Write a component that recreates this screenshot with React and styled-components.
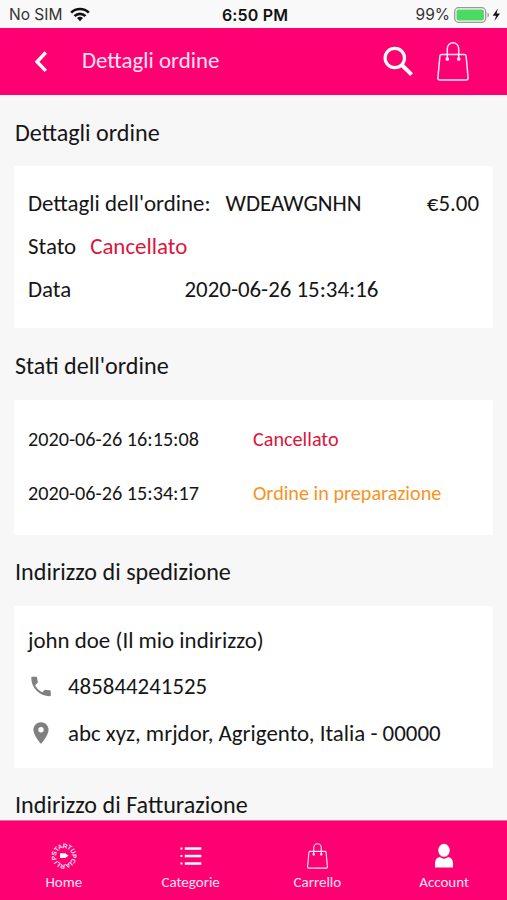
import React from 'react';
import styled, { createGlobalStyle } from 'styled-components';
import { MdPhone, MdPlace } from 'react-icons/md';

const GlobalStyle = createGlobalStyle`
  * {
    box-sizing: border-box;
  }

  body {
    margin: 0;
    background-color: #f7f7f7;
  }
`;

const Screen = styled.div`
  display: flex;
  flex-direction: column;
  height: 100vh;
  overflow: hidden;
  background-color: #f7f7f7;
  color: #161616;
  font-family: Carlito, Calibri, Lato, sans-serif;
`;

const StatusBar = styled.div`
  display: grid;
  grid-template-columns: 1fr auto 1fr;
  align-items: center;
  flex: none;
  height: 28px;
  padding: 1px 6px 0 9px;
  background-color: #f9f9f9;
  font-family: Inter, 'Liberation Sans', sans-serif;
  font-size: 15.5px;
  color: #333;
`;

const StatusGroup = styled.div`
  display: flex;
  align-items: center;
  justify-content: ${(p) => (p.$end ? 'flex-end' : 'flex-start')};
`;

const Carrier = styled.span`
  margin-right: 8px;
`;

const Clock = styled.span`
  font-weight: 600;
  font-size: 16px;
  letter-spacing: 0.15px;
  color: #111;
`;

const Percent = styled.span`
  margin-right: 4px;
`;

const Header = styled.header`
  display: flex;
  align-items: center;
  flex: none;
  height: 67px;
  padding: 0 38px 0 33px;
  background-color: #ff0073;
  color: #fff;
`;

const BackButton = styled.button`
  display: flex;
  padding: 0;
  border: none;
  background: none;
`;

const Title = styled.h1`
  flex: 1;
  margin: 0 0 3px 32px;
  font-size: 22.9px;
  line-height: 28px;
  font-weight: 400;
  color: #ffe3f0;
`;

const HeaderIcons = styled.div`
  display: flex;
  align-items: center;
  gap: 23px;
`;

const Content = styled.main`
  flex: 1;
  min-height: 0;
  padding: 0 14px;
  overflow: hidden;
`;

const SectionTitle = styled.h2`
  display: flex;
  align-items: center;
  height: ${(p) => p.$height || 71}px;
  margin: 0;
  padding: ${(p) => p.$top || 2}px 0 0 1px;
  font-size: 24.1px;
  line-height: 28px;
  font-weight: 400;
`;

const Card = styled.section`
  height: ${(p) => p.$height}px;
  padding: ${(p) => p.$top}px 14px 0;
  border-radius: 2px;
  background-color: #fff;
`;

const Row = styled.div`
  display: flex;
  align-items: center;
  height: ${(p) => p.$height || 43}px;
  font-size: ${(p) => (p.$small ? 20.2 : 22.9)}px;
  line-height: 28px;
  white-space: nowrap;
`;

const OrderCode = styled.span`
  flex: 1;
  margin-left: 15px;
`;

const Status = styled.span`
  margin-left: ${(p) => p.$gap || 0}px;
  color: ${(p) => (p.$pending ? '#f7931e' : '#dc143c')};
`;

const DateLabel = styled.span`
  width: 156.5px;
`;

const HistoryDate = styled.span`
  width: 225px;
`;

const RowIcon = styled.span`
  display: flex;
  justify-content: center;
  width: 26px;
  margin: 1px 14px 0 0;
  color: #808080;
`;

const TabBar = styled.nav`
  display: grid;
  grid-template-columns: repeat(4, 1fr);
  flex: none;
  height: 80px;
  border-top: 1px solid #e0739f;
  background-color: #ff0073;
  color: #fff;
`;

const Tab = styled.a`
  display: flex;
  flex-direction: column;
  align-items: center;
  padding: 19px 0 0 1px;
  font-size: 15px;
  line-height: 18px;
  color: #ffe3f0;
`;

const TabIcon = styled.span`
  display: flex;
  align-items: center;
  justify-content: center;
  height: 31px;
  margin-bottom: 2px;
`;

const RingText = styled.text`
  font-family: 'Liberation Sans', sans-serif;
  font-size: 6.5px;
  font-weight: 700;
  fill: #ffe3f0;
`;

function WifiIcon() {
  return (
    <svg width="20" height="15" viewBox="0 0 20 15" fill="none" stroke="#111" strokeWidth="2.7">
      <path d="M1.2 5.6a12.6 12.6 0 0 1 17.6 0" />
      <path d="M4.5 9.1a7.9 7.9 0 0 1 11 0" />
      <path d="M10 14.2l-3-3.1a4.4 4.4 0 0 1 6 0z" fill="#111" stroke="none" />
    </svg>
  );
}

function BatteryIcon() {
  return (
    <svg width="47" height="16" viewBox="0 0 47 16">
      <rect x="0.7" y="0.7" width="31" height="14.6" rx="4" fill="#f9f9f9" stroke="#999" strokeWidth="1.3" />
      <rect x="2.5" y="2.5" width="27.4" height="11" rx="2" fill="#4cd964" />
      <path d="M33.5 5.5c2 .8 2 4.2 0 5z" fill="#999" />
      <path d="M43.8 1.5L38.7 8.8h3.4L40.4 14l5.6-7.4h-3.4z" fill="#111" />
    </svg>
  );
}

function BackIcon() {
  return (
    <svg width="17" height="22" viewBox="0 0 17 22" fill="none" stroke="#fff" strokeWidth="3.4">
      <path d="M12.8 1.5L4 10.7l8.8 9.2" />
    </svg>
  );
}

function SearchIcon() {
  return (
    <svg width="31" height="32" viewBox="0 0 31 32" fill="none" stroke="#fff">
      <circle cx="11.8" cy="12" r="9.7" strokeWidth="3.2" />
      <path d="M18.6 18.8l10 9.8" strokeWidth="4" />
    </svg>
  );
}

function BagIcon({ width, height, stroke }) {
  return (
    <svg width={width} height={height} viewBox="0 0 32 39" fill="none" stroke="#ffe9f3" strokeWidth={stroke} strokeLinejoin="round">
      <path d="M4.6 12.500h22.800q1.500 0 1.700 1.500l2 21.800q.1 2.200-2 2.200H2.900q-2.100 0-2-2.200L2.900 14q.2-1.500 1.700-1.500z" />
      <path d="M10.3 17V6.500a5.700 5.700 0 0 1 11.400 0V17" />
      <circle cx="10.3" cy="17" r="1.1" fill="#fff" />
      <circle cx="21.7" cy="17" r="1.1" fill="#fff" />
    </svg>
  );
}

function HomeLogo() {
  return (
    <svg width="26" height="26" viewBox="0 0 26 26">
      <defs>
        <path id="ring" d="M5.900 16.700a8 8 0 1 1 .01 .02" />
      </defs>
      <RingText>
        <textPath href="#ring" textLength="49">PSTARTUPCIARLI</textPath>
      </RingText>
      <path d="M9 10.300h5.200l3.500 2.400-3.500 2.400H9z" fill="#fff" />
    </svg>
  );
}

function ListIcon() {
  return (
    <svg width="22" height="20" viewBox="0 0 22 20" fill="#fff">
      {[1.5, 9, 16.5].map((y) => (
        <React.Fragment key={y}>
          <rect x="0.5" y={y} width="2" height="2" />
          <rect x="4.8" y={y - 0.2} width="16.5" height="2.5" />
        </React.Fragment>
      ))}
    </svg>
  );
}

function AccountIcon() {
  return (
    <svg width="20" height="26" viewBox="0 0 20 26" fill="#fff">
      <ellipse cx="10" cy="7.3" rx="5.7" ry="6.5" />
      <path d="M1 24.500v-4q0-5.600 4.800-6.500Q10 17.600 14.200 14 19 14.900 19 20.500v4z" />
    </svg>
  );
}

const history = [
  { date: '2020-06-26 16:15:08', status: 'Cancellato' },
  { date: '2020-06-26 15:34:17', status: 'Ordine in preparazione', pending: true },
];

const tabs = [
  { label: 'Home', icon: <HomeLogo /> },
  { label: 'Categorie', icon: <ListIcon /> },
  { label: 'Carrello', icon: <BagIcon width={21} height={26} stroke={1.7} /> },
  { label: 'Account', icon: <AccountIcon /> },
];

function App() {
  return (
    <Screen>
      <GlobalStyle />
      <StatusBar>
        <StatusGroup>
          <Carrier>No SIM</Carrier>
          <WifiIcon />
        </StatusGroup>
        <Clock>6:50 PM</Clock>
        <StatusGroup $end>
          <Percent>99%</Percent>
          <BatteryIcon />
        </StatusGroup>
      </StatusBar>

      <Header>
        <BackButton aria-label="Indietro">
          <BackIcon />
        </BackButton>
        <Title>Dettagli ordine</Title>
        <HeaderIcons>
          <SearchIcon />
          <BagIcon width={32} height={39} stroke={1.5} />
        </HeaderIcons>
      </Header>

      <Content>
        <SectionTitle $top={4}>Dettagli ordine</SectionTitle>
        <Card $height={162} $top={15}>
          <Row>
            <span>Dettagli dell'ordine:</span>
            <OrderCode>WDEAWGNHN</OrderCode>
            <span>€5.00</span>
          </Row>
          <Row>
            <span>Stato</span>
            <Status $gap={14}>Cancellato</Status>
          </Row>
          <Row>
            <DateLabel>Data</DateLabel>
            <span>2020-06-26 15:34:16</span>
          </Row>
        </Card>

        <SectionTitle $height={72} $top={4}>Stati dell'ordine</SectionTitle>
        <Card $height={135} $top={12}>
          {history.map((item) => (
            <Row key={item.date} $height={54} $small>
              <HistoryDate>{item.date}</HistoryDate>
              <Status $pending={item.pending}>{item.status}</Status>
            </Row>
          ))}
        </Card>

        <SectionTitle>Indirizzo di spedizione</SectionTitle>
        <Card $height={162} $top={11}>
          <Row $height={46}>john doe (Il mio indirizzo)</Row>
          <Row $height={46}>
            <RowIcon><MdPhone size={27} /></RowIcon>
            <span>485844241525</span>
          </Row>
          <Row $height={47}>
            <RowIcon><MdPlace size={26} /></RowIcon>
            <span>abc xyz, mrjdor, Agrigento, Italia - 00000</span>
          </Row>
        </Card>

        <SectionTitle>Indirizzo di Fatturazione</SectionTitle>
      </Content>

      <TabBar>
        {tabs.map((tab) => (
          <Tab key={tab.label}>
            <TabIcon>{tab.icon}</TabIcon>
            {tab.label}
          </Tab>
        ))}
      </TabBar>
    </Screen>
  );
}

export default App;
